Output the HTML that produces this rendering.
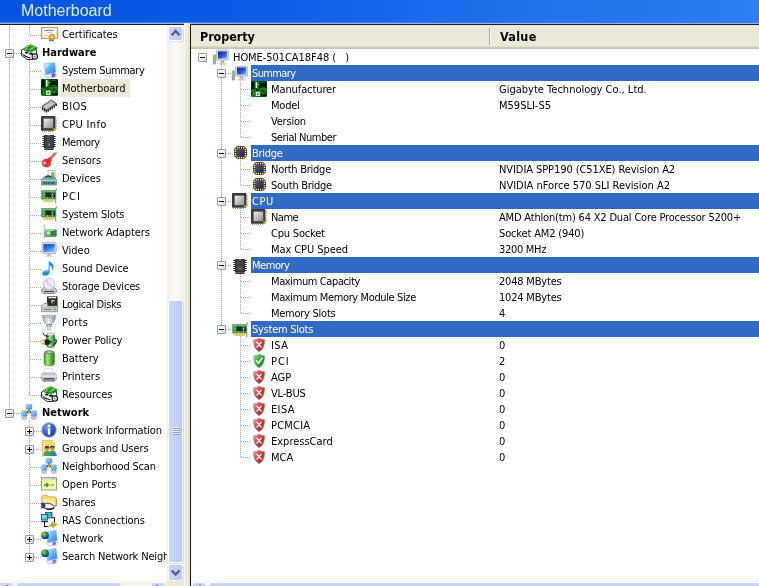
<!DOCTYPE html>
<html><head><meta charset="utf-8"><title>Motherboard</title>
<style>
html,body{margin:0;padding:0}
body{width:759px;height:586px;overflow:hidden;background:#fff;position:relative;font-family:"DejaVu Sans Condensed", "DejaVu Sans", "Liberation Sans", sans-serif;font-size:11px;color:#000}
div,span,svg,i{position:absolute;display:block}
svg.ic{overflow:visible}
#title{left:0;top:0;width:759px;height:22px;background:linear-gradient(to right,#0855e2 0%,#0b5be4 30%,#2272ec 70%,#2d7ff2 100%)}
#title span{left:20.500px;letter-spacing:0;will-change:transform;top:1px;font-family:"Liberation Sans",sans-serif;font-size:16px;line-height:19px;color:#dcecff;white-space:nowrap}
#tl1{left:0;top:22px;width:759px;height:1px;background:#3b7bea}
#tl2{left:0;top:23px;width:759px;height:1px;background:#8fb2ee}
#tl3{left:0;top:24px;width:759px;height:1px;background:#1c1c1c}
#left{left:0;top:25px;width:167px;height:557px;overflow:hidden;background:#fff}
#leftin{left:0;top:-25px;width:400px;height:600px;will-change:transform}
#right{left:191px;top:25px;width:568px;height:557px;overflow:hidden;background:#fff}
#rightin{left:-191px;top:-25px;width:800px;height:600px;will-change:transform}
#split{left:184px;top:23px;width:6px;height:563px;background:linear-gradient(to right,#faf9f3 0,#f1eee0 1.5px,#ece9d8 3px,#e6e2cf 6px)}
#rb{left:190px;top:24px;width:1px;height:562px;background:#111}
#hdr{left:191px;top:25px;width:568px;height:21px;background:#ece9d8}
#hdr1{left:191px;top:46px;width:568px;height:1px;background:#e0dccb}
#hdr2{left:191px;top:47px;width:568px;height:1px;background:#d0ccbb}
#hdr3{left:191px;top:48px;width:568px;height:1px;background:#c6c2b2}
.hd{will-change:transform;font-family:"DejaVu Sans Condensed","DejaVu Sans","Liberation Sans",sans-serif;font-weight:bold;font-size:12.5px;line-height:16px;white-space:nowrap;top:29px;letter-spacing:-0.1px}
#hsep1{left:489px;top:28px;width:1px;height:17px;background:#aca899}
#hsep2{left:490px;top:28px;width:1px;height:17px;background:#fff}
.lt,.rt,.hd{font-stretch:condensed}
.lt{white-space:nowrap;line-height:18px;height:18px;padding:0 2px}
.lt.b{font-weight:bold;padding:0}
.lt.sel{background:none}
#selbg{left:61px;top:79px;width:69px;height:18px;background:#ece9d8}
.rt{white-space:nowrap;line-height:16px;height:16px;padding:0 2px}
.rt.w{color:#fff}
.hi{left:251px;width:520px;height:16px;background:#316ac5}
.vl{width:1px;background:repeating-linear-gradient(to bottom,#a4a4a4 0,#a4a4a4 1px,transparent 1px,transparent 2px)}
.hl{height:1px;background:repeating-linear-gradient(to right,#a4a4a4 0,#a4a4a4 1px,transparent 1px,transparent 2px)}
.bx{width:7px;height:7px;border:1px solid #8e9cb4;border-radius:1px;background:linear-gradient(135deg,#fff 0%,#f4f3ee 50%,#cfccc0 100%)}
.bx .mh{left:1px;top:3px;width:5px;height:1px;background:#000}
.bx .mv{left:3px;top:1px;width:1px;height:5px;background:#000}
#vs{left:167px;top:25px;width:17px;height:557px;background:linear-gradient(to right,#f1efe8,#fbfaf7 50%,#f3f1ea)}
.sb{border:1px solid #fff;border-radius:2.5px;box-shadow:0.5px 0.5px 0 0 rgba(150,165,205,.55)}
.sbo{border-radius:3px;background:#b5c5ee}
#hsl{left:0;top:581px;width:167px;height:5px;background:#f5f4ef}
#hsr{left:191px;top:581px;width:568px;height:5px;background:#f5f4ef}
#corner{left:167px;top:582px;width:17px;height:4px;background:#ece9d8}
</style></head><body>
<div id="title"><span>Motherboard</span></div>
<div id="tl1"></div><div id="tl2"></div><div id="tl3"></div>
<div id="left"><div id="leftin">
<div id="selbg"></div>
<div class="vl" style="left:9px;top:25px;height:388px"></div>
<div class="vl" style="left:29px;top:25px;height:10px"></div>
<div class="vl" style="left:29px;top:60px;height:336px"></div>
<div class="vl" style="left:29px;top:420px;height:138px"></div>
<div class="hl" style="left:30px;top:35px;width:11px"></div>
<svg class="ic" style="left:41px;top:26px" width="16" height="16" viewBox="0 0 16 16"><rect x="0.600" y="1.500" width="16" height="10.800" fill="#fbfaf4" stroke="#b4a284" stroke-width="1.200"/>
<rect x="1.900" y="2.800" width="13.400" height="8.200" fill="none" stroke="#e6dcc6" stroke-width="0.800"/>
<path d="M3.500 4.500h9.500" stroke="#5a78c8" stroke-width="0.900"/>
<path d="M6.500 6.500h4" stroke="#9ab0e0" stroke-width="0.800"/>
<path d="M3.500 9.300h3" stroke="#8aa0c8" stroke-width="0.800"/>
<path d="M8.600 11.500l-0.500 4.300l2.300 -1.300l2.300 1.300l-0.500 -4.300z" fill="#2a58c0"/>
<circle cx="10.800" cy="10.900" r="2.900" fill="#e8a820" stroke="#c88a10" stroke-width="0.500"/>
<circle cx="10.800" cy="10.900" r="1.300" fill="#f8d060"/></svg>
<span class="lt" id="L0" style="left:60px;top:26px;letter-spacing:-0.08px">Certificates</span>
<div class="hl" style="left:14px;top:53px;width:7px"></div>
<div class="bx" style="left:5px;top:49px"><i class="mh"></i></div>
<svg class="ic" style="left:21px;top:44px" width="16" height="16" viewBox="0 0 16 16"><path d="M0.600 6l3 -1.500l12 1v6.500l-3.500 3.500h-6l-5.500 -4z" fill="#f6f6f6" stroke="#1c1c1c" stroke-width="0.900"/>
<path d="M2.500 4.800l3.500 -3.300l4 -1.300l6.500 3.300l-0.500 2.500l-5.500 2l-7 -1.200z" fill="#2e9c2a"/>
<path d="M5 3.500l3 -1.500M8.500 5.500l4 -1.500M4 5.500l2.500 -0.800M11 2.500l3 1.500" stroke="#90e060" stroke-width="1"/>
<path d="M7 4l2 -0.800M12.500 5.500l2.500 -1M5.500 6.500l3 0.500" stroke="#0e5a14" stroke-width="0.900"/>
<rect x="8.800" y="-0.300" width="2.200" height="1.600" fill="#e2c230"/>
<ellipse cx="5.800" cy="8.600" rx="1.800" ry="1.100" fill="#141414"/>
<ellipse cx="10" cy="9.700" rx="2" ry="1.100" fill="#141414"/>
<path d="M2 10.500c2 2 4 3 7.500 3.500" stroke="#1c1c1c" stroke-width="1.200" fill="none"/>
<path d="M1.200 9l2.500 2.500" stroke="#58b048" stroke-width="1"/>
<circle cx="13.800" cy="12.600" r="2.700" fill="#efefef" stroke="#141414" stroke-width="1.100"/>
<circle cx="13.800" cy="12.600" r="0.900" fill="#777"/></svg>
<span class="lt b" id="L1" style="left:42px;top:44px">Hardware</span>
<div class="hl" style="left:30px;top:71px;width:11px"></div>
<svg class="ic" style="left:41px;top:62px" width="16" height="16" viewBox="0 0 16 16"><ellipse cx="9.500" cy="13.300" rx="5.800" ry="2.500" fill="#efedf8" stroke="#aaa4d4" stroke-width="0.600"/>
<path d="M10.500 10.500l3.800 1v3l-3.500 1z" fill="#6c5cba"/>
<linearGradient id="ss3" x1="0" y1="0" x2="1" y2="1"><stop offset="0" stop-color="#c4eaff"/><stop offset="0.450" stop-color="#58b4f8"/><stop offset="1" stop-color="#2a6cdc"/></linearGradient>
<path d="M3 1.800l10.800 -1.300l1.200 10l-10.500 2.300z" fill="url(#ss3)" stroke="#8cc4ee" stroke-width="0.700"/>
<path d="M4 2.600l4.500 -0.600l-3.500 5z" fill="#dff4ff" opacity="0.700"/></svg>
<span class="lt" id="L2" style="left:60px;top:62px;letter-spacing:-0.39px">System Summary</span>
<div class="hl" style="left:30px;top:89px;width:11px"></div>
<svg class="ic" style="left:41px;top:79px" width="17" height="17" viewBox="0 0 16 16"><rect x="0" y="0" width="16" height="16" rx="1.300" fill="#0b7e0e"/>
<rect x="0.300" y="0.400" width="3.300" height="7.800" fill="#041404"/>
<rect x="8" y="0.400" width="7.800" height="6.600" fill="#041404"/>
<rect x="9.300" y="1.200" width="5" height="0.800" fill="#0b7e0e"/>
<rect x="9.800" y="5.800" width="4.500" height="0.800" fill="#0b7e0e"/>
<rect x="4.700" y="1" width="1.400" height="6" fill="#f4fbf4"/>
<path d="M6.800 3.400h2.200M7.300 2.600v1.600" stroke="#7ad87a" stroke-width="0.700"/>
<rect x="5" y="8" width="2.600" height="1.600" fill="#041404"/>
<rect x="11" y="9" width="2.200" height="1.800" fill="#041404"/>
<rect x="13.800" y="11" width="2.200" height="1.200" fill="#041404"/>
<rect x="4.800" y="10.900" width="4" height="4" fill="#f4fbf4"/>
<rect x="6.100" y="12.200" width="1.500" height="1.500" fill="#064d08"/>
<rect x="10" y="13.200" width="5.800" height="2.200" fill="#041404"/>
<rect x="0.500" y="11" width="1.200" height="2.300" fill="#041404"/>
<rect x="2" y="12" width="0.800" height="0.800" fill="#bfeebf"/>
<rect x="12" y="7.500" width="3" height="0.700" fill="#2a9c2e"/></svg>
<span class="lt sel" id="L3" style="left:60px;top:80px">Motherboard</span>
<div class="hl" style="left:30px;top:107px;width:11px"></div>
<svg class="ic" style="left:41px;top:98px" width="16" height="16" viewBox="0 0 16 16"><path d="M0.800 8.300l9.700 -6.300l5 3.700l-10 6.800z" fill="#a4a4a4" stroke="#3a3a3a" stroke-width="0.800"/>
<path d="M2.500 8.400l8 -5.200l3 2.200l-8.200 5.500z" fill="#c4c4c4"/>
<path d="M1.500 9.500v2.500M3.300 10.700v2.600M5.200 12v2.500M7.200 11.300v2.500M9.200 10v2.500M11.200 8.700v2.500M13.200 7.300v2.500M15.200 6v2.300" stroke="#111" stroke-width="1.300"/></svg>
<span class="lt" id="L4" style="left:60px;top:98px;letter-spacing:0.37px">BIOS</span>
<div class="hl" style="left:30px;top:125px;width:11px"></div>
<svg class="ic" style="left:41px;top:116px" width="16" height="16" viewBox="0 0 16 16"><rect x="0" y="0" width="14.5" height="14.8" rx="0.8" fill="#3b3a38"/>
<path d="M14.500 2.500h1.300M14.500 4.500h1.300M14.500 6.500h1.300M14.500 8.500h1.300M14.500 10.500h1.300M14.500 12.500h1.300" stroke="#c09a34" stroke-width="1"/>
<path d="M1.5 14.8v1.1M3.5 14.8v1.1M5.5 14.8v1.1M7.5 14.8v1.1M9.5 14.8v1.1M11.5 14.8v1.1" stroke="#b08a2e" stroke-width="1"/>
<linearGradient id="cg6" x1="0" y1="0" x2="1" y2="1"><stop offset="0" stop-color="#f2f2f2"/><stop offset="1" stop-color="#8c8c8c"/></linearGradient>
<rect x="2.6" y="2.6" width="9.6" height="9.6" fill="url(#cg6)"/>
<rect x="12.2" y="12.4" width="2" height="2" fill="#d2b23c"/></svg>
<span class="lt" id="L5" style="left:60px;top:116px;letter-spacing:0.33px">CPU Info</span>
<div class="hl" style="left:30px;top:143px;width:11px"></div>
<svg class="ic" style="left:41px;top:134px" width="16" height="16" viewBox="0 0 16 16"><path d="M1.5 2.5h13M1.5 4.5h13M1.5 6.5h13M1.5 8.5h13M1.5 10.5h13M1.5 12.5h13" stroke="#9a9a9a" stroke-width="1"/>
<path d="M1.5 2.5h13M1.5 4.5h13M1.5 6.5h13M1.5 8.5h13M1.5 10.5h13M1.5 12.5h13" stroke="#222" stroke-width="1" stroke-dasharray="1.5 10 1.5 0"/>
<rect x="3" y="1" width="10" height="13.6" rx="0.8" fill="#2e2e2e"/>
<rect x="4.2" y="2.2" width="7.6" height="11" fill="#454545"/>
<rect x="6.5" y="1" width="3" height="1.3" fill="#777"/>
<rect x="7" y="9.5" width="2" height="2" fill="#7b7b7b"/>
<rect x="3.4" y="14.6" width="9.2" height="1.2" fill="#111"/></svg>
<span class="lt" id="L6" style="left:60px;top:134px;letter-spacing:-0.42px">Memory</span>
<div class="hl" style="left:30px;top:161px;width:11px"></div>
<svg class="ic" style="left:41px;top:152px" width="16" height="16" viewBox="0 0 16 16"><path d="M14.800 0.800l-7 7.500" stroke="#d4b8b8" stroke-width="3" stroke-linecap="round"/>
<path d="M13.800 2l-6.500 6.800" stroke="#e45a5a" stroke-width="2.200" stroke-linecap="round"/>
<path d="M0.800 10.800c0 -2.800 2.500 -4.300 4.700 -3.800l3.200 -1.800l2.300 2.800l-1.500 2.800c1 2.200 -1 4.700 -3.700 4.700c-2.700 0 -5 -2 -5 -4.700z" fill="#e03434"/>
<circle cx="3.600" cy="11" r="1.400" fill="#f8b8b8"/>
<path d="M6 8l3.300 3.800" stroke="#b41c1c" stroke-width="0.900"/></svg>
<span class="lt" id="L7" style="left:60px;top:152px">Sensors</span>
<div class="hl" style="left:30px;top:179px;width:11px"></div>
<svg class="ic" style="left:41px;top:170px" width="16" height="16" viewBox="0 0 16 16"><rect x="7" y="0.500" width="7" height="8" fill="#f6f8f6" stroke="#9aaab0" stroke-width="0.700"/>
<rect x="10.500" y="2.500" width="2.500" height="5" rx="1" fill="#7ac860" stroke="#4a9a3a" stroke-width="0.500"/>
<path d="M4 7.500c1.500 -2 5 -2 6.500 0" stroke="#1a2a2a" stroke-width="1.300" fill="none"/>
<path d="M0.500 9.500l2 -2.200h11l2 2.200v5.500h-15z" fill="#6f9ca2" stroke="#4a7a80" stroke-width="0.600"/>
<rect x="0.500" y="9.500" width="15" height="1.600" fill="#a8c8cc"/>
<rect x="2.500" y="12" width="11" height="2" rx="1" fill="#3a5a60"/>
<path d="M4 13h8" stroke="#b8d4d8" stroke-width="0.700" stroke-dasharray="1 1"/></svg>
<span class="lt" id="L8" style="left:60px;top:170px">Devices</span>
<div class="hl" style="left:30px;top:197px;width:11px"></div>
<svg class="ic" style="left:41px;top:188px" width="16" height="16" viewBox="0 0 16 16"><path d="M16 0.200l-1.300 2.300v12.800" stroke="#8f97a8" stroke-width="1.200" fill="none"/>
<rect x="0.300" y="2.200" width="14.400" height="9.300" fill="#3d9650"/>
<rect x="0.300" y="2.200" width="14.400" height="1.800" fill="#62b46e"/>
<rect x="4.500" y="4.600" width="6" height="4.600" fill="#1f2a22"/>
<rect x="12.200" y="5" width="2" height="4.500" fill="#1f3a2a"/>
<path d="M2.300 4.200h1M2.300 6.600h1M2.300 9.300h1M9.500 3.600h1M11.200 6.600h1M11 9.800h1M6 10h1" stroke="#d6ecc8" stroke-width="1"/>
<rect x="2.400" y="11.500" width="10.400" height="2.300" fill="#e2b43a"/>
<path d="M3.800 11.500v2.300M5.800 11.500v2.300M7.800 11.500v2.300M9.800 11.500v2.300M11.600 11.500v2.300" stroke="#f6dc84" stroke-width="0.800"/></svg>
<span class="lt" id="L9" style="left:60px;top:188px;letter-spacing:1.10px">PCI</span>
<div class="hl" style="left:30px;top:215px;width:11px"></div>
<svg class="ic" style="left:41px;top:206px" width="16" height="16" viewBox="0 0 16 16"><path d="M16 0.200l-1.300 2.300v12.800" stroke="#8f97a8" stroke-width="1.200" fill="none"/>
<rect x="0.300" y="2.200" width="14.400" height="9.300" fill="#3d9650"/>
<rect x="0.300" y="2.200" width="14.400" height="1.800" fill="#62b46e"/>
<rect x="4.500" y="4.600" width="6" height="4.600" fill="#1f2a22"/>
<rect x="12.200" y="5" width="2" height="4.500" fill="#1f3a2a"/>
<path d="M2.300 4.200h1M2.300 6.600h1M2.300 9.300h1M9.500 3.600h1M11.200 6.600h1M11 9.800h1M6 10h1" stroke="#d6ecc8" stroke-width="1"/>
<rect x="2.400" y="11.500" width="10.400" height="2.300" fill="#e2b43a"/>
<path d="M3.800 11.500v2.300M5.800 11.500v2.300M7.800 11.500v2.300M9.800 11.500v2.300M11.600 11.500v2.300" stroke="#f6dc84" stroke-width="0.800"/></svg>
<span class="lt" id="L10" style="left:60px;top:206px;letter-spacing:-0.15px">System Slots</span>
<div class="hl" style="left:30px;top:233px;width:11px"></div>
<svg class="ic" style="left:41px;top:224px" width="16" height="16" viewBox="0 0 16 16"><path d="M2.500 0.500l1 1.500v13" stroke="#b4bcc8" stroke-width="1.200" fill="none"/>
<rect x="4" y="5" width="11.500" height="8" fill="#58b060"/>
<rect x="4" y="5" width="11.500" height="2" fill="#a0d8a0"/>
<rect x="6" y="7.500" width="3" height="3" fill="#c8e8c8"/>
<rect x="10.500" y="7" width="2" height="4.500" fill="#2a6a3a"/>
<rect x="13" y="6" width="2.500" height="6" fill="#2e8a44"/>
<rect x="3" y="8" width="2.500" height="3.500" fill="#8a98a8"/></svg>
<span class="lt" id="L11" style="left:60px;top:224px;letter-spacing:-0.06px">Network Adapters</span>
<div class="hl" style="left:30px;top:251px;width:11px"></div>
<svg class="ic" style="left:41px;top:242px" width="16" height="16" viewBox="0 0 16 16"><rect x="0.800" y="0.500" width="14.400" height="11" rx="0.800" fill="#d6dadf" stroke="#a4aab4" stroke-width="0.700"/>
<linearGradient id="vd13" x1="0" y1="0" x2="0.600" y2="1"><stop offset="0" stop-color="#1248c8"/><stop offset="0.550" stop-color="#2e74e4"/><stop offset="1" stop-color="#7ab8f8"/></linearGradient>
<rect x="2.400" y="2" width="11.200" height="8" fill="url(#vd13)"/>
<path d="M6.500 11.500h3l0.700 2.300h-4.400z" fill="#b4b8c0"/>
<rect x="4.300" y="13.600" width="7.400" height="1.200" rx="0.500" fill="#c8ccd2"/></svg>
<span class="lt" id="L12" style="left:60px;top:242px">Video</span>
<div class="hl" style="left:30px;top:269px;width:11px"></div>
<svg class="ic" style="left:41px;top:260px" width="16" height="16" viewBox="0 0 16 16"><path d="M7.800 0.500c0.800 2 5 2.500 4.800 6.500c-0.100 1.800 -0.800 3 -1.800 4c1 -2.500 0 -5 -2.200 -5.800v7.300c0 2 -2 3.300 -4.200 3.300c-1.800 0 -3.200 -0.800 -3.200 -2.300c0 -1.800 2 -3.200 4.200 -3.200c0.800 0 1.500 0.100 2.100 0.400z" fill="#1e8ee0"/>
<path d="M2.500 12.500c0.800 -1.200 3 -1.800 4.500 -1.200" stroke="#7cc4f8" stroke-width="1" fill="none"/></svg>
<span class="lt" id="L13" style="left:60px;top:260px;letter-spacing:-0.15px">Sound Device</span>
<div class="hl" style="left:30px;top:287px;width:11px"></div>
<svg class="ic" style="left:41px;top:278px" width="16" height="16" viewBox="0 0 16 16"><path d="M0.500 11.500l2.500 -2h10l2.500 2v2.500l-2 1.500h-11l-2 -1.500z" fill="#c4c6c8" stroke="#6a6c70" stroke-width="0.700"/>
<path d="M3 13.500h10" stroke="#4a4c50" stroke-width="1.200"/>
<circle cx="8" cy="6" r="5.600" fill="#f0ecf8" stroke="#b4aed0" stroke-width="0.700"/>
<path d="M8 6l-4.500 -3.200a5.600 5.600 0 0 1 3 -2z" fill="#d8c8f0"/>
<path d="M8 6l4.800 2.800a5.600 5.600 0 0 1 -3 2.500z" fill="#e4d4f0"/>
<circle cx="8" cy="6" r="1.700" fill="#fff" stroke="#c0b8d8" stroke-width="0.500"/>
<circle cx="8" cy="6" r="0.600" fill="#c04a6a"/></svg>
<span class="lt" id="L14" style="left:60px;top:278px;letter-spacing:-0.19px">Storage Devices</span>
<div class="hl" style="left:30px;top:305px;width:11px"></div>
<svg class="ic" style="left:41px;top:296px" width="16" height="16" viewBox="0 0 16 16"><rect x="6" y="0.300" width="10.500" height="10.400" rx="0.600" fill="#2c2c2c"/>
<rect x="7.500" y="0.800" width="7.500" height="1.500" fill="#f4f4f4"/>
<rect x="10.500" y="4" width="3" height="3.200" fill="#e8e8e8"/>
<rect x="11.600" y="4.900" width="1.900" height="2.300" fill="#2c2c2c"/>
<path d="M0.500 10l2.500 -2.500h3.500v2.500h10v5.700h-16z" fill="#d8dadc" stroke="#7a7c80" stroke-width="0.700"/>
<rect x="1.200" y="11.500" width="14.600" height="3.500" rx="0.600" fill="#f0f1f2" stroke="#8a8c90" stroke-width="0.500"/>
<path d="M2.500 13.300h8.500" stroke="#5a5c60" stroke-width="1.100"/>
<rect x="12.400" y="12.300" width="2.400" height="1.900" fill="#4aa84a"/></svg>
<span class="lt" id="L15" style="left:60px;top:296px;letter-spacing:-0.40px">Logical Disks</span>
<div class="hl" style="left:30px;top:323px;width:11px"></div>
<svg class="ic" style="left:41px;top:314px" width="16" height="16" viewBox="0 0 16 16"><linearGradient id="pt17" x1="0" y1="0" x2="1" y2="0"><stop offset="0" stop-color="#8a98a4"/><stop offset="0.450" stop-color="#f0f4f6"/><stop offset="1" stop-color="#7a8894"/></linearGradient>
<path d="M0.800 1.800h14.400l-1.200 1.500v1.500c0 2.500 -2.500 4.500 -3.500 5.500v2h-5v-2c-1 -1 -3.500 -3 -3.500 -5.500v-1.500z" fill="url(#pt17)" stroke="#6a7884" stroke-width="0.600"/>
<ellipse cx="8" cy="2.300" rx="5.500" ry="1.300" fill="#c8d0d6" stroke="#7a8894" stroke-width="0.500"/>
<rect x="6.300" y="12.300" width="3.400" height="3.700" fill="#dfe4e8" stroke="#8a98a4" stroke-width="0.500"/>
<path d="M6 10.500h4" stroke="#5a6874" stroke-width="0.800"/></svg>
<span class="lt" id="L16" style="left:60px;top:314px;letter-spacing:0.30px">Ports</span>
<div class="hl" style="left:30px;top:341px;width:11px"></div>
<svg class="ic" style="left:41px;top:332px" width="16" height="16" viewBox="0 0 16 16"><linearGradient id="pw18" x1="0" y1="0" x2="1" y2="0"><stop offset="0" stop-color="#2a8a2a"/><stop offset="0.400" stop-color="#9ae89a"/><stop offset="1" stop-color="#1e7a1e"/></linearGradient>
<rect x="5.500" y="1.200" width="8" height="14.300" rx="3" fill="url(#pw18)" stroke="#1e5a1e" stroke-width="0.600"/>
<ellipse cx="9.500" cy="2.300" rx="3.400" ry="1.300" fill="#e8f4e8" stroke="#7aa87a" stroke-width="0.400"/>
<path d="M2 0.800c0.500 2.500 2.500 3.500 5.500 3.500" stroke="#111" stroke-width="1" fill="none"/>
<path d="M14.500 7c1.500 2 0.500 5 -2 6" stroke="#111" stroke-width="1.300" fill="none"/>
<path d="M3.500 7.500h4l3.500 2.500l-3.500 2.800h-4z" fill="#1c1c1c"/>
<path d="M8 9l2 1.300l-2 1.300z" fill="#4a4a4a"/>
<rect x="0.300" y="8" width="3.400" height="1.500" fill="#d8b428"/>
<rect x="0.300" y="11" width="3.400" height="1.500" fill="#d8b428"/></svg>
<span class="lt" id="L17" style="left:60px;top:332px;letter-spacing:-0.10px">Power Policy</span>
<div class="hl" style="left:30px;top:359px;width:11px"></div>
<svg class="ic" style="left:41px;top:350px" width="16" height="16" viewBox="0 0 16 16"><linearGradient id="bt19" x1="0" y1="0" x2="1" y2="0"><stop offset="0" stop-color="#3a9a2a"/><stop offset="0.350" stop-color="#a8e878"/><stop offset="0.700" stop-color="#4aa832"/><stop offset="1" stop-color="#2a7a1e"/></linearGradient>
<rect x="3" y="0.800" width="10.500" height="15" rx="3.500" fill="url(#bt19)" stroke="#3a7a2a" stroke-width="0.500"/>
<ellipse cx="8.250" cy="2.200" rx="4.600" ry="1.400" fill="#8a9a8a" stroke="#5a6a5a" stroke-width="0.400"/>
<ellipse cx="8.250" cy="2.100" rx="2.500" ry="0.700" fill="#d8e0d8"/></svg>
<span class="lt" id="L18" style="left:60px;top:350px">Battery</span>
<div class="hl" style="left:30px;top:377px;width:11px"></div>
<svg class="ic" style="left:41px;top:368px" width="16" height="16" viewBox="0 0 16 16"><path d="M4.500 0.500h7l1 5h-9z" fill="#fbfbfb" stroke="#c8ccd0" stroke-width="0.600"/>
<path d="M0.500 7.500c0 -1.500 1 -2.500 2.500 -2.500h10c1.500 0 2.500 1 2.500 2.500v4h-15z" fill="#c4ccd2" stroke="#8a949c" stroke-width="0.600"/>
<rect x="0.500" y="7.500" width="15" height="1.300" fill="#e8ecf0"/>
<path d="M1 11.500h14l-1.500 2.500h-11z" fill="#7a8a94"/>
<rect x="3" y="10" width="10" height="1.300" fill="#4a5a64"/>
<path d="M3.500 13.300h9" stroke="#b4c4cc" stroke-width="0.900"/></svg>
<span class="lt" id="L19" style="left:60px;top:368px">Printers</span>
<div class="hl" style="left:30px;top:395px;width:11px"></div>
<svg class="ic" style="left:41px;top:386px" width="16" height="16" viewBox="0 0 16 16"><path d="M0.600 6l3 -1.500l12 1v6.500l-3.500 3.500h-6l-5.500 -4z" fill="#f6f6f6" stroke="#1c1c1c" stroke-width="0.900"/>
<path d="M2.500 4.800l3.500 -3.300l4 -1.300l6.500 3.300l-0.500 2.500l-5.500 2l-7 -1.200z" fill="#2e9c2a"/>
<path d="M5 3.500l3 -1.500M8.500 5.500l4 -1.500M4 5.500l2.500 -0.800M11 2.500l3 1.500" stroke="#90e060" stroke-width="1"/>
<path d="M7 4l2 -0.800M12.500 5.500l2.500 -1M5.500 6.500l3 0.500" stroke="#0e5a14" stroke-width="0.900"/>
<rect x="8.800" y="-0.300" width="2.200" height="1.600" fill="#e2c230"/>
<ellipse cx="5.800" cy="8.600" rx="1.800" ry="1.100" fill="#141414"/>
<ellipse cx="10" cy="9.700" rx="2" ry="1.100" fill="#141414"/>
<path d="M2 10.500c2 2 4 3 7.500 3.500" stroke="#1c1c1c" stroke-width="1.200" fill="none"/>
<path d="M1.200 9l2.500 2.500" stroke="#58b048" stroke-width="1"/>
<circle cx="13.800" cy="12.600" r="2.700" fill="#efefef" stroke="#141414" stroke-width="1.100"/>
<circle cx="13.800" cy="12.600" r="0.900" fill="#777"/></svg>
<span class="lt" id="L20" style="left:60px;top:386px">Resources</span>
<div class="hl" style="left:14px;top:413px;width:7px"></div>
<div class="bx" style="left:5px;top:409px"><i class="mh"></i></div>
<svg class="ic" style="left:21px;top:404px" width="16" height="16" viewBox="0 0 16 16"><path d="M8 6.500l-4 4M8 6.500l4 4M8 6.500v-2" stroke="#1a1a1a" stroke-width="1.400"/>
<rect x="6.800" y="6.300" width="2.400" height="3.400" fill="#e8a020"/>
<linearGradient id="nm22" x1="0" y1="0" x2="1" y2="1"><stop offset="0" stop-color="#b4dcfc"/><stop offset="1" stop-color="#3a8ae4"/></linearGradient>
<rect x="5" y="0.300" width="6" height="5" rx="0.600" fill="url(#nm22)" stroke="#5a9ae0" stroke-width="0.400"/>
<rect x="0.500" y="6.800" width="5.500" height="5.600" rx="0.600" fill="url(#nm22)" stroke="#5a9ae0" stroke-width="0.400"/>
<rect x="10" y="6.800" width="5.500" height="5.600" rx="0.600" fill="url(#nm22)" stroke="#5a9ae0" stroke-width="0.400"/>
<ellipse cx="3.250" cy="14" rx="2.800" ry="1.500" fill="#c4c8e4" stroke="#8a90c0" stroke-width="0.400"/>
<ellipse cx="12.750" cy="14" rx="2.800" ry="1.500" fill="#c4c8e4" stroke="#8a90c0" stroke-width="0.400"/></svg>
<span class="lt b" id="L21" style="left:42px;top:404px">Network</span>
<div class="hl" style="left:30px;top:431px;width:11px"></div>
<div class="bx" style="left:25px;top:427px"><i class="mh"></i><i class="mv"></i></div>
<svg class="ic" style="left:41px;top:422px" width="16" height="16" viewBox="0 0 16 16"><radialGradient id="ig23" cx="0.350" cy="0.300" r="0.800"><stop offset="0" stop-color="#6a9af0"/><stop offset="0.600" stop-color="#2a54c8"/><stop offset="1" stop-color="#1a3a9a"/></radialGradient>
<circle cx="8" cy="8" r="7.300" fill="url(#ig23)" stroke="#a8b8e4" stroke-width="1"/>
<rect x="6.800" y="6.300" width="2.400" height="6.500" rx="0.500" fill="#fff"/>
<circle cx="8" cy="4" r="1.400" fill="#fff"/></svg>
<span class="lt" id="L22" style="left:60px;top:422px;letter-spacing:-0.09px">Network Information</span>
<div class="hl" style="left:30px;top:449px;width:11px"></div>
<div class="bx" style="left:25px;top:445px"><i class="mh"></i><i class="mv"></i></div>
<svg class="ic" style="left:41px;top:440px" width="16" height="16" viewBox="0 0 16 16"><path d="M1.500 0.300h10l2 2v13.500h-12z" fill="#f6dc70" stroke="#d0b040" stroke-width="0.600"/>
<path d="M11.500 0.300v2h2z" fill="#fff4b8"/>
<circle cx="6" cy="8.300" r="2.100" fill="#b08458"/>
<path d="M3.800 8.500c-0.400 -3.300 4.800 -3.300 4.500 -0.300c-1.300 -1.200 -3.200 -1 -4.500 0.300z" fill="#2e2014"/>
<path d="M2.500 16c0 -3.500 1.300 -5.200 3.600 -5.200s3.600 1.700 3.600 5.200z" fill="#4aa050"/>
<circle cx="11.300" cy="8" r="2.100" fill="#b08458"/>
<path d="M9 8.200c-0.400 -3.300 4.800 -3.300 4.600 -0.300c-1.300 -1.200 -3.300 -1 -4.600 0.300z" fill="#2e2014"/>
<path d="M8.300 16c0 -3.500 1 -5.200 3.200 -5.200s4.300 2 4.300 5.200z" fill="#2a88a4"/></svg>
<span class="lt" id="L23" style="left:60px;top:440px;letter-spacing:-0.09px">Groups and Users</span>
<div class="hl" style="left:30px;top:467px;width:11px"></div>
<svg class="ic" style="left:41px;top:458px" width="16" height="16" viewBox="0 0 16 16"><path d="M8 6.500l-4 4M8 6.500l4 4M8 6.500v-2" stroke="#1a1a1a" stroke-width="1.400"/>
<rect x="6.800" y="6.300" width="2.400" height="3.400" fill="#e8a020"/>
<linearGradient id="nm25" x1="0" y1="0" x2="1" y2="1"><stop offset="0" stop-color="#b4dcfc"/><stop offset="1" stop-color="#3a8ae4"/></linearGradient>
<rect x="5" y="0.300" width="6" height="5" rx="0.600" fill="url(#nm25)" stroke="#5a9ae0" stroke-width="0.400"/>
<rect x="0.500" y="6.800" width="5.500" height="5.600" rx="0.600" fill="url(#nm25)" stroke="#5a9ae0" stroke-width="0.400"/>
<rect x="10" y="6.800" width="5.500" height="5.600" rx="0.600" fill="url(#nm25)" stroke="#5a9ae0" stroke-width="0.400"/>
<ellipse cx="3.250" cy="14" rx="2.800" ry="1.500" fill="#c4c8e4" stroke="#8a90c0" stroke-width="0.400"/>
<ellipse cx="12.750" cy="14" rx="2.800" ry="1.500" fill="#c4c8e4" stroke="#8a90c0" stroke-width="0.400"/></svg>
<span class="lt" id="L24" style="left:60px;top:458px;letter-spacing:-0.18px">Neighborhood Scan</span>
<div class="hl" style="left:30px;top:485px;width:11px"></div>
<svg class="ic" style="left:41px;top:476px" width="16" height="16" viewBox="0 0 16 16"><rect x="0.500" y="1.500" width="15" height="12.500" fill="#f4f6a8" stroke="#8a8c84" stroke-width="0.800"/>
<rect x="0.900" y="1.900" width="14.200" height="1.800" fill="#d4d6c4"/>
<path d="M11 2.800h3" stroke="#6a6c64" stroke-width="0.800" stroke-dasharray="0.800 0.600"/>
<path d="M3 9h4M5.300 7l2 2l-2 2" stroke="#2aa02a" stroke-width="1.300" fill="none"/>
<path d="M9.500 9h3.500" stroke="#5ab85a" stroke-width="1.300"/></svg>
<span class="lt" id="L25" style="left:60px;top:476px">Open Ports</span>
<div class="hl" style="left:30px;top:503px;width:11px"></div>
<svg class="ic" style="left:41px;top:494px" width="16" height="16" viewBox="0 0 16 16"><path d="M0.800 3c0 -1 0.700 -2 2 -2h3l1.500 1.800h6c1.200 0 2 0.800 2 2v6.700h-14.500z" fill="#f6d878" stroke="#c89a28" stroke-width="0.700"/>
<rect x="2" y="5" width="12.500" height="5.500" fill="#fbec9c"/>
<path d="M15.300 5v7l-1.500 1" stroke="#b88a20" stroke-width="0.900" fill="none"/>
<rect x="0.300" y="8.800" width="3.500" height="5.500" fill="#1a3a9a"/>
<path d="M3.800 10c2 -1 5 -1 7 0.500c2 1.200 3 2.500 1 3.500c-2 1 -6 1.200 -8 0.300z" fill="#f4f4f4" stroke="#1a1a1a" stroke-width="0.800"/>
<path d="M5 14.800c2 1 6 0.800 8.500 -0.800" stroke="#1a1a1a" stroke-width="1.200" fill="none"/></svg>
<span class="lt" id="L26" style="left:60px;top:494px">Shares</span>
<div class="hl" style="left:30px;top:521px;width:11px"></div>
<svg class="ic" style="left:41px;top:512px" width="16" height="16" viewBox="0 0 16 16"><rect x="4.500" y="0.500" width="6.500" height="5.500" fill="#3ab4c8" stroke="#1a4a5a" stroke-width="0.800"/>
<rect x="0.500" y="2.500" width="6" height="5.500" fill="#58c8e0" stroke="#1a4a5a" stroke-width="0.800"/>
<path d="M1.500 4h3.500" stroke="#d4f4fc" stroke-width="0.900"/>
<path d="M0.500 9.500h6.500" stroke="#1a2a3a" stroke-width="1.300"/>
<path d="M11 5.500h2.500v5" stroke="#1a1a1a" stroke-width="1"  fill="none"/>
<path d="M3.500 10v4.500h4" stroke="#1a1a1a" stroke-width="1.100" fill="none"/>
<path d="M8.500 13.500l3.500 -3.500l3.800 2l-3.300 3.500z" fill="#f0d428" stroke="#8a7a18" stroke-width="0.600"/>
<path d="M10 13l3.500 1M11 12l3.300 1" stroke="#8a7a18" stroke-width="0.700"/></svg>
<span class="lt" id="L27" style="left:60px;top:512px;letter-spacing:-0.06px">RAS Connections</span>
<div class="hl" style="left:30px;top:539px;width:11px"></div>
<div class="bx" style="left:25px;top:535px"><i class="mh"></i><i class="mv"></i></div>
<svg class="ic" style="left:41px;top:530px" width="16" height="16" viewBox="0 0 16 16"><ellipse cx="11" cy="13.500" rx="5.200" ry="2.400" fill="#efedf8" stroke="#aaa4d4" stroke-width="0.600"/>
<path d="M11.500 11l3.500 1v2.500l-3.500 1z" fill="#8a7ac8"/>
<linearGradient id="ng29" x1="0" y1="0" x2="1" y2="1"><stop offset="0" stop-color="#cceaff"/><stop offset="0.500" stop-color="#62b4f8"/><stop offset="1" stop-color="#2a74dc"/></linearGradient>
<path d="M5 2.300l10 -2l1.300 10.200l-9.500 2.300z" fill="url(#ng29)" stroke="#8ac0ec" stroke-width="0.700"/>
<radialGradient id="gl29" cx="0.350" cy="0.350" r="0.750"><stop offset="0" stop-color="#8ad86a"/><stop offset="0.500" stop-color="#2a8a3a"/><stop offset="1" stop-color="#1a3aa8"/></radialGradient>
<circle cx="4" cy="5.300" r="3.900" fill="url(#gl29)"/>
<path d="M1.800 7.500c1.500 1 3.500 1 5.200 -0.500" stroke="#1a3ab8" stroke-width="1.400" fill="none"/></svg>
<span class="lt" id="L28" style="left:60px;top:530px">Network</span>
<div class="hl" style="left:30px;top:557px;width:11px"></div>
<div class="bx" style="left:25px;top:553px"><i class="mh"></i><i class="mv"></i></div>
<svg class="ic" style="left:41px;top:548px" width="16" height="16" viewBox="0 0 16 16"><ellipse cx="11" cy="13.500" rx="5.200" ry="2.400" fill="#efedf8" stroke="#aaa4d4" stroke-width="0.600"/>
<path d="M11.500 11l3.500 1v2.500l-3.500 1z" fill="#8a7ac8"/>
<linearGradient id="ng30" x1="0" y1="0" x2="1" y2="1"><stop offset="0" stop-color="#cceaff"/><stop offset="0.500" stop-color="#62b4f8"/><stop offset="1" stop-color="#2a74dc"/></linearGradient>
<path d="M5 2.300l10 -2l1.300 10.200l-9.500 2.300z" fill="url(#ng30)" stroke="#8ac0ec" stroke-width="0.700"/>
<radialGradient id="gl30" cx="0.350" cy="0.350" r="0.750"><stop offset="0" stop-color="#8ad86a"/><stop offset="0.500" stop-color="#2a8a3a"/><stop offset="1" stop-color="#1a3aa8"/></radialGradient>
<circle cx="4" cy="5.300" r="3.900" fill="url(#gl30)"/>
<path d="M1.800 7.500c1.500 1 3.500 1 5.200 -0.500" stroke="#1a3ab8" stroke-width="1.400" fill="none"/></svg>
<span class="lt" id="L29" style="left:60px;top:548px;letter-spacing:-0.16px">Search Network Neighborhood</span>
</div></div>
<div id="vs"></div>
<div class="sb" style="left:168px;top:25.5px;width:13.3px;height:13.8px;background:linear-gradient(to right,#c9d7fc,#bccbf7)"></div>
<svg style="left:168px;top:25px" width="16" height="17" viewBox="0 0 16 17"><path d="M3.700 10.200L7.600 6L11.500 10.200" stroke="#4d6185" stroke-width="2.300" fill="none"/></svg>
<div class="sb" style="left:168px;top:299.7px;width:13.4px;height:261.5px;background:linear-gradient(to right,#c9d7fc,#bccbf7)"></div>
<svg style="left:172px;top:427px" width="8" height="8" viewBox="0 0 8 8"><path d="M0 0.500h7M0 2.500h7M0 4.500h7M0 6.500h7" stroke="#eef2fd" stroke-width="1"/><path d="M1 1.500h7M1 3.500h7M1 5.500h7M1 7.500h7" stroke="#8c9fd0" stroke-width="1"/></svg>
<div class="sb" style="left:168px;top:564.2px;width:13.3px;height:14.399999999999999px;background:linear-gradient(to right,#c9d7fc,#bccbf7)"></div>
<svg style="left:168px;top:564px" width="16" height="17" viewBox="0 0 16 17"><path d="M3.700 6.400L7.600 10.600L11.500 6.400" stroke="#4d6185" stroke-width="2.300" fill="none"/></svg>
<div id="split"></div><div id="rb"></div>
<div id="right"><div id="rightin">
<div class="vl" style="left:221px;top:64px;height:265px"></div>
<div class="vl" style="left:240px;top:80px;height:58px"></div>
<div class="vl" style="left:240px;top:160px;height:26px"></div>
<div class="vl" style="left:240px;top:208px;height:42px"></div>
<div class="vl" style="left:240px;top:272px;height:42px"></div>
<div class="vl" style="left:240px;top:336px;height:122px"></div>
<div class="bx" style="left:198px;top:53px"><i class="mh"></i></div>
<svg class="ic" style="left:213px;top:49px" width="16" height="16" viewBox="0 0 16 16"><g transform="translate(0 0.700)">
<rect x="0.300" y="5" width="2.200" height="9.500" rx="0.800" fill="#a8a89c" stroke="#6e6e66" stroke-width="0.500"/>
<rect x="0.800" y="6" width="1.200" height="2.500" fill="#7fd24a"/>
<rect x="3.500" y="0.500" width="12" height="10" rx="0.800" fill="#d4d8dc" stroke="#9aa0a8" stroke-width="0.600"/>
<linearGradient id="scr31" x1="0" y1="0" x2="1" y2="1"><stop offset="0" stop-color="#0a1ea8"/><stop offset="0.600" stop-color="#2a5ad8"/><stop offset="1" stop-color="#8cb8f4"/></linearGradient>
<rect x="5" y="1.800" width="9" height="7" fill="url(#scr31)"/>
<path d="M8 10.500h3l0.800 3h-4.600z" fill="#b8bcc2"/>
<rect x="5.500" y="13.500" width="8" height="1.300" rx="0.600" fill="#c6cace"/>
</g></svg>
<span class="rt" id="P0" style="left:231px;top:50px;letter-spacing:-0.06px">HOME-501CA18F48 (&nbsp;&nbsp;&nbsp;)</span>
<div class="hi" style="top:65px"></div>
<div class="hl" style="left:226px;top:73px;width:6px"></div>
<div class="bx" style="left:217px;top:69px"><i class="mh"></i></div>
<svg class="ic" style="left:232px;top:65px" width="16" height="16" viewBox="0 0 16 16"><g transform="translate(0 0.700)">
<rect x="0.300" y="5" width="2.200" height="9.500" rx="0.800" fill="#a8a89c" stroke="#6e6e66" stroke-width="0.500"/>
<rect x="0.800" y="6" width="1.200" height="2.500" fill="#7fd24a"/>
<rect x="3.500" y="0.500" width="12" height="10" rx="0.800" fill="#d4d8dc" stroke="#9aa0a8" stroke-width="0.600"/>
<linearGradient id="scr32" x1="0" y1="0" x2="1" y2="1"><stop offset="0" stop-color="#0a1ea8"/><stop offset="0.600" stop-color="#2a5ad8"/><stop offset="1" stop-color="#8cb8f4"/></linearGradient>
<rect x="5" y="1.800" width="9" height="7" fill="url(#scr32)"/>
<path d="M8 10.500h3l0.800 3h-4.600z" fill="#b8bcc2"/>
<rect x="5.500" y="13.500" width="8" height="1.300" rx="0.600" fill="#c6cace"/>
</g></svg>
<span class="rt w" id="P1" style="left:250px;top:66px;letter-spacing:-0.63px">Summary</span>
<div class="hl" style="left:241px;top:89px;width:10px"></div>
<svg class="ic" style="left:251px;top:81px" width="16" height="16" viewBox="0 0 16 16"><rect x="0" y="0" width="16" height="16" rx="1.300" fill="#0b7e0e"/>
<rect x="0.300" y="0.400" width="3.300" height="7.800" fill="#041404"/>
<rect x="8" y="0.400" width="7.800" height="6.600" fill="#041404"/>
<rect x="9.300" y="1.200" width="5" height="0.800" fill="#0b7e0e"/>
<rect x="9.800" y="5.800" width="4.500" height="0.800" fill="#0b7e0e"/>
<rect x="4.700" y="1" width="1.400" height="6" fill="#f4fbf4"/>
<path d="M6.800 3.400h2.200M7.300 2.600v1.600" stroke="#7ad87a" stroke-width="0.700"/>
<rect x="5" y="8" width="2.600" height="1.600" fill="#041404"/>
<rect x="11" y="9" width="2.200" height="1.800" fill="#041404"/>
<rect x="13.800" y="11" width="2.200" height="1.200" fill="#041404"/>
<rect x="4.800" y="10.900" width="4" height="4" fill="#f4fbf4"/>
<rect x="6.100" y="12.200" width="1.500" height="1.500" fill="#064d08"/>
<rect x="10" y="13.200" width="5.800" height="2.200" fill="#041404"/>
<rect x="0.500" y="11" width="1.200" height="2.300" fill="#041404"/>
<rect x="2" y="12" width="0.800" height="0.800" fill="#bfeebf"/>
<rect x="12" y="7.500" width="3" height="0.700" fill="#2a9c2e"/></svg>
<span class="rt" id="P2" style="left:269px;top:82px;letter-spacing:-0.10px">Manufacturer</span>
<span class="rt" id="V2" style="left:497px;top:82px;letter-spacing:0.01px">Gigabyte Technology Co., Ltd.</span>
<div class="hl" style="left:241px;top:105px;width:10px"></div>
<span class="rt" id="P3" style="left:269px;top:98px;letter-spacing:-0.23px">Model</span>
<span class="rt" id="V3" style="left:497px;top:98px">M59SLI-S5</span>
<div class="hl" style="left:241px;top:121px;width:10px"></div>
<span class="rt" id="P4" style="left:269px;top:114px;letter-spacing:-0.20px">Version</span>
<div class="hl" style="left:241px;top:137px;width:10px"></div>
<span class="rt" id="P5" style="left:269px;top:130px;letter-spacing:-0.45px">Serial Number</span>
<div class="hi" style="top:145px"></div>
<div class="hl" style="left:226px;top:153px;width:6px"></div>
<div class="bx" style="left:217px;top:149px"><i class="mh"></i></div>
<svg class="ic" style="left:232px;top:145px" width="16" height="16" viewBox="0 0 16 16"><path d="M5 1.100h7l3 3v7l-3 3h-7l-3 -3v-7z" fill="#3a3226"/>
<path d="M5.300 1.700v1.800M7.300 1.700v1.800M9.600 1.700v1.800M11.700 1.700v1.800M5.300 11.700v1.800M7.300 11.700v1.800M9.600 11.700v1.800M11.700 11.700v1.800" stroke="#f0dc98" stroke-width="1.200"/>
<path d="M2.600 4.400h1.800M2.600 6.400h1.800M2.600 8.600h1.800M2.600 10.700h1.800M12.600 4.400h1.800M12.600 6.400h1.800M12.600 8.600h1.800M12.600 10.700h1.800" stroke="#f0dc98" stroke-width="1.200"/>
<linearGradient id="bg34" x1="0" y1="0" x2="1" y2="1"><stop offset="0" stop-color="#5a5680"/><stop offset="1" stop-color="#25233a"/></linearGradient>
<rect x="4.800" y="3.900" width="7.400" height="7.400" fill="url(#bg34)"/></svg>
<span class="rt w" id="P6" style="left:250px;top:146px;letter-spacing:-0.30px">Bridge</span>
<div class="hl" style="left:241px;top:169px;width:10px"></div>
<svg class="ic" style="left:251px;top:161px" width="16" height="16" viewBox="0 0 16 16"><path d="M5 1.100h7l3 3v7l-3 3h-7l-3 -3v-7z" fill="#3a3226"/>
<path d="M5.300 1.700v1.800M7.300 1.700v1.800M9.600 1.700v1.800M11.700 1.700v1.800M5.300 11.700v1.800M7.300 11.700v1.800M9.600 11.700v1.800M11.700 11.700v1.800" stroke="#f0dc98" stroke-width="1.200"/>
<path d="M2.600 4.400h1.800M2.600 6.400h1.800M2.600 8.600h1.800M2.600 10.700h1.800M12.600 4.400h1.800M12.600 6.400h1.800M12.600 8.600h1.800M12.600 10.700h1.800" stroke="#f0dc98" stroke-width="1.200"/>
<linearGradient id="bg35" x1="0" y1="0" x2="1" y2="1"><stop offset="0" stop-color="#5a5680"/><stop offset="1" stop-color="#25233a"/></linearGradient>
<rect x="4.800" y="3.900" width="7.400" height="7.400" fill="url(#bg35)"/></svg>
<span class="rt" id="P7" style="left:269px;top:162px;letter-spacing:-0.26px">North Bridge</span>
<span class="rt" id="V7" style="left:497px;top:162px;letter-spacing:-0.08px">NVIDIA SPP190 (C51XE) Revision A2</span>
<div class="hl" style="left:241px;top:185px;width:10px"></div>
<svg class="ic" style="left:251px;top:177px" width="16" height="16" viewBox="0 0 16 16"><path d="M5 1.100h7l3 3v7l-3 3h-7l-3 -3v-7z" fill="#3a3226"/>
<path d="M5.300 1.700v1.800M7.300 1.700v1.800M9.600 1.700v1.800M11.700 1.700v1.800M5.300 11.700v1.800M7.300 11.700v1.800M9.600 11.700v1.800M11.700 11.700v1.800" stroke="#f0dc98" stroke-width="1.200"/>
<path d="M2.600 4.400h1.800M2.600 6.400h1.800M2.600 8.600h1.800M2.600 10.700h1.800M12.600 4.400h1.800M12.600 6.400h1.800M12.600 8.600h1.800M12.600 10.700h1.800" stroke="#f0dc98" stroke-width="1.200"/>
<linearGradient id="bg36" x1="0" y1="0" x2="1" y2="1"><stop offset="0" stop-color="#5a5680"/><stop offset="1" stop-color="#25233a"/></linearGradient>
<rect x="4.800" y="3.900" width="7.400" height="7.400" fill="url(#bg36)"/></svg>
<span class="rt" id="P8" style="left:269px;top:178px;letter-spacing:-0.27px">South Bridge</span>
<span class="rt" id="V8" style="left:497px;top:178px">NVIDIA nForce 570 SLI Revision A2</span>
<div class="hi" style="top:193px"></div>
<div class="hl" style="left:226px;top:201px;width:6px"></div>
<div class="bx" style="left:217px;top:197px"><i class="mh"></i></div>
<svg class="ic" style="left:232px;top:193px" width="16" height="16" viewBox="0 0 16 16"><rect x="0" y="0" width="14.5" height="14.8" rx="0.8" fill="#3b3a38"/>
<path d="M14.500 2.500h1.300M14.500 4.500h1.300M14.500 6.500h1.300M14.500 8.500h1.300M14.500 10.500h1.300M14.500 12.500h1.300" stroke="#c09a34" stroke-width="1"/>
<path d="M1.5 14.8v1.1M3.5 14.8v1.1M5.5 14.8v1.1M7.5 14.8v1.1M9.5 14.8v1.1M11.5 14.8v1.1" stroke="#b08a2e" stroke-width="1"/>
<linearGradient id="cg37" x1="0" y1="0" x2="1" y2="1"><stop offset="0" stop-color="#f2f2f2"/><stop offset="1" stop-color="#8c8c8c"/></linearGradient>
<rect x="2.6" y="2.6" width="9.6" height="9.6" fill="url(#cg37)"/>
<rect x="12.2" y="12.4" width="2" height="2" fill="#d2b23c"/></svg>
<span class="rt w" id="P9" style="left:250px;top:194px;letter-spacing:0.60px">CPU</span>
<div class="hl" style="left:241px;top:217px;width:10px"></div>
<svg class="ic" style="left:251px;top:209px" width="16" height="16" viewBox="0 0 16 16"><rect x="0" y="0" width="14.5" height="14.8" rx="0.8" fill="#3b3a38"/>
<path d="M14.500 2.500h1.300M14.500 4.500h1.300M14.500 6.500h1.300M14.500 8.500h1.300M14.500 10.500h1.300M14.500 12.500h1.300" stroke="#c09a34" stroke-width="1"/>
<path d="M1.5 14.8v1.1M3.5 14.8v1.1M5.5 14.8v1.1M7.5 14.8v1.1M9.5 14.8v1.1M11.5 14.8v1.1" stroke="#b08a2e" stroke-width="1"/>
<linearGradient id="cg38" x1="0" y1="0" x2="1" y2="1"><stop offset="0" stop-color="#f2f2f2"/><stop offset="1" stop-color="#8c8c8c"/></linearGradient>
<rect x="2.6" y="2.6" width="9.6" height="9.6" fill="url(#cg38)"/>
<rect x="12.2" y="12.4" width="2" height="2" fill="#d2b23c"/></svg>
<span class="rt" id="P10" style="left:269px;top:210px;letter-spacing:-0.53px">Name</span>
<span class="rt" id="V10" style="left:497px;top:210px;letter-spacing:-0.18px">AMD Athlon(tm) 64 X2 Dual Core Processor 5200+</span>
<div class="hl" style="left:241px;top:233px;width:10px"></div>
<span class="rt" id="P11" style="left:269px;top:226px;letter-spacing:-0.20px">Cpu Socket</span>
<span class="rt" id="V11" style="left:497px;top:226px;letter-spacing:-0.15px">Socket AM2 (940)</span>
<div class="hl" style="left:241px;top:249px;width:10px"></div>
<span class="rt" id="P12" style="left:269px;top:242px;letter-spacing:-0.08px">Max CPU Speed</span>
<span class="rt" id="V12" style="left:497px;top:242px;letter-spacing:-0.29px">3200 MHz</span>
<div class="hi" style="top:257px"></div>
<div class="hl" style="left:226px;top:265px;width:6px"></div>
<div class="bx" style="left:217px;top:261px"><i class="mh"></i></div>
<svg class="ic" style="left:232px;top:258px" width="16" height="16" viewBox="0 0 16 16"><path d="M1.5 2.5h13M1.5 4.5h13M1.5 6.5h13M1.5 8.5h13M1.5 10.5h13M1.5 12.5h13" stroke="#9a9a9a" stroke-width="1"/>
<path d="M1.5 2.5h13M1.5 4.5h13M1.5 6.5h13M1.5 8.5h13M1.5 10.5h13M1.5 12.5h13" stroke="#222" stroke-width="1" stroke-dasharray="1.5 10 1.5 0"/>
<rect x="3" y="1" width="10" height="13.6" rx="0.8" fill="#2e2e2e"/>
<rect x="4.2" y="2.2" width="7.6" height="11" fill="#454545"/>
<rect x="6.5" y="1" width="3" height="1.3" fill="#777"/>
<rect x="7" y="9.5" width="2" height="2" fill="#7b7b7b"/>
<rect x="3.4" y="14.6" width="9.2" height="1.2" fill="#111"/></svg>
<span class="rt w" id="P13" style="left:250px;top:258px;letter-spacing:-0.46px">Memory</span>
<div class="hl" style="left:241px;top:281px;width:10px"></div>
<span class="rt" id="P14" style="left:269px;top:274px;letter-spacing:-0.39px">Maximum Capacity</span>
<span class="rt" id="V14" style="left:497px;top:274px;letter-spacing:-0.19px">2048 MBytes</span>
<div class="hl" style="left:241px;top:297px;width:10px"></div>
<span class="rt" id="P15" style="left:269px;top:290px;letter-spacing:-0.38px">Maximum Memory Module Size</span>
<span class="rt" id="V15" style="left:497px;top:290px;letter-spacing:-0.19px">1024 MBytes</span>
<div class="hl" style="left:241px;top:313px;width:10px"></div>
<span class="rt" id="P16" style="left:269px;top:306px;letter-spacing:-0.26px">Memory Slots</span>
<span class="rt" id="V16" style="left:497px;top:306px">4</span>
<div class="hi" style="top:321px"></div>
<div class="hl" style="left:226px;top:329px;width:6px"></div>
<div class="bx" style="left:217px;top:325px"><i class="mh"></i></div>
<svg class="ic" style="left:232px;top:322px" width="16" height="16" viewBox="0 0 16 16"><path d="M16 0.200l-1.300 2.300v12.800" stroke="#8f97a8" stroke-width="1.200" fill="none"/>
<rect x="0.300" y="2.200" width="14.400" height="9.300" fill="#3d9650"/>
<rect x="0.300" y="2.200" width="14.400" height="1.800" fill="#62b46e"/>
<rect x="4.500" y="4.600" width="6" height="4.600" fill="#1f2a22"/>
<rect x="12.200" y="5" width="2" height="4.500" fill="#1f3a2a"/>
<path d="M2.300 4.200h1M2.300 6.600h1M2.300 9.300h1M9.500 3.600h1M11.200 6.600h1M11 9.800h1M6 10h1" stroke="#d6ecc8" stroke-width="1"/>
<rect x="2.400" y="11.500" width="10.400" height="2.300" fill="#e2b43a"/>
<path d="M3.800 11.500v2.300M5.800 11.500v2.300M7.800 11.500v2.300M9.800 11.500v2.300M11.600 11.500v2.300" stroke="#f6dc84" stroke-width="0.800"/></svg>
<span class="rt w" id="P17" style="left:250px;top:322px;letter-spacing:-0.26px">System Slots</span>
<div class="hl" style="left:241px;top:345px;width:10px"></div>
<svg class="ic" style="left:251px;top:337px" width="16" height="16" viewBox="0 0 16 16"><linearGradient id="sr41" x1="0" y1="0" x2="1" y2="1"><stop offset="0" stop-color="#f4b4b4"/><stop offset="0.400" stop-color="#d84444"/><stop offset="1" stop-color="#8a1818"/></linearGradient>
<path d="M8.100 1c1.500 1.100 3.300 1.700 5.500 1.700c0.200 5 -1.200 9.400 -5.500 12c-4.300 -2.600 -5.700 -7 -5.500 -12c2.200 0 4 -0.600 5.500 -1.700z" fill="url(#sr41)" stroke="#c07070" stroke-width="0.500"/>
<path d="M6 5.200l4.200 4.800M10.200 5.200l-4.200 4.800" stroke="#fbeaea" stroke-width="1.500" stroke-linecap="round"/></svg>
<span class="rt" id="P18" style="left:269px;top:338px;letter-spacing:0.45px">ISA</span>
<span class="rt" id="V18" style="left:497px;top:338px">0</span>
<div class="hl" style="left:241px;top:361px;width:10px"></div>
<svg class="ic" style="left:251px;top:353px" width="16" height="16" viewBox="0 0 16 16"><linearGradient id="sg42" x1="0" y1="0" x2="1" y2="1"><stop offset="0" stop-color="#b4ecae"/><stop offset="0.400" stop-color="#3cb044"/><stop offset="1" stop-color="#166a1e"/></linearGradient>
<path d="M8.100 1c1.500 1.100 3.300 1.700 5.500 1.700c0.200 5 -1.200 9.400 -5.500 12c-4.300 -2.600 -5.700 -7 -5.500 -12c2.200 0 4 -0.600 5.500 -1.700z" fill="url(#sg42)" stroke="#6ab070" stroke-width="0.500"/>
<path d="M5.500 7.800l2 2.400l3.400 -5" stroke="#f4fff4" stroke-width="1.600" stroke-linecap="round" stroke-linejoin="round" fill="none"/></svg>
<span class="rt" id="P19" style="left:269px;top:354px;letter-spacing:0.95px">PCI</span>
<span class="rt" id="V19" style="left:497px;top:354px">2</span>
<div class="hl" style="left:241px;top:377px;width:10px"></div>
<svg class="ic" style="left:251px;top:369px" width="16" height="16" viewBox="0 0 16 16"><linearGradient id="sr43" x1="0" y1="0" x2="1" y2="1"><stop offset="0" stop-color="#f4b4b4"/><stop offset="0.400" stop-color="#d84444"/><stop offset="1" stop-color="#8a1818"/></linearGradient>
<path d="M8.100 1c1.500 1.100 3.300 1.700 5.500 1.700c0.200 5 -1.200 9.400 -5.500 12c-4.300 -2.600 -5.700 -7 -5.500 -12c2.200 0 4 -0.600 5.500 -1.700z" fill="url(#sr43)" stroke="#c07070" stroke-width="0.500"/>
<path d="M6 5.200l4.200 4.800M10.200 5.200l-4.200 4.800" stroke="#fbeaea" stroke-width="1.500" stroke-linecap="round"/></svg>
<span class="rt" id="P20" style="left:269px;top:370px">AGP</span>
<span class="rt" id="V20" style="left:497px;top:370px">0</span>
<div class="hl" style="left:241px;top:393px;width:10px"></div>
<svg class="ic" style="left:251px;top:385px" width="16" height="16" viewBox="0 0 16 16"><linearGradient id="sr44" x1="0" y1="0" x2="1" y2="1"><stop offset="0" stop-color="#f4b4b4"/><stop offset="0.400" stop-color="#d84444"/><stop offset="1" stop-color="#8a1818"/></linearGradient>
<path d="M8.100 1c1.500 1.100 3.300 1.700 5.500 1.700c0.200 5 -1.200 9.400 -5.500 12c-4.300 -2.600 -5.700 -7 -5.500 -12c2.200 0 4 -0.600 5.500 -1.700z" fill="url(#sr44)" stroke="#c07070" stroke-width="0.500"/>
<path d="M6 5.200l4.200 4.800M10.200 5.200l-4.200 4.800" stroke="#fbeaea" stroke-width="1.500" stroke-linecap="round"/></svg>
<span class="rt" id="P21" style="left:269px;top:386px;letter-spacing:-0.16px">VL-BUS</span>
<span class="rt" id="V21" style="left:497px;top:386px">0</span>
<div class="hl" style="left:241px;top:409px;width:10px"></div>
<svg class="ic" style="left:251px;top:401px" width="16" height="16" viewBox="0 0 16 16"><linearGradient id="sr45" x1="0" y1="0" x2="1" y2="1"><stop offset="0" stop-color="#f4b4b4"/><stop offset="0.400" stop-color="#d84444"/><stop offset="1" stop-color="#8a1818"/></linearGradient>
<path d="M8.100 1c1.500 1.100 3.300 1.700 5.500 1.700c0.200 5 -1.200 9.400 -5.500 12c-4.300 -2.600 -5.700 -7 -5.500 -12c2.200 0 4 -0.600 5.500 -1.700z" fill="url(#sr45)" stroke="#c07070" stroke-width="0.500"/>
<path d="M6 5.200l4.200 4.800M10.200 5.200l-4.200 4.800" stroke="#fbeaea" stroke-width="1.500" stroke-linecap="round"/></svg>
<span class="rt" id="P22" style="left:269px;top:402px;letter-spacing:0.37px">EISA</span>
<span class="rt" id="V22" style="left:497px;top:402px">0</span>
<div class="hl" style="left:241px;top:425px;width:10px"></div>
<svg class="ic" style="left:251px;top:417px" width="16" height="16" viewBox="0 0 16 16"><linearGradient id="sr46" x1="0" y1="0" x2="1" y2="1"><stop offset="0" stop-color="#f4b4b4"/><stop offset="0.400" stop-color="#d84444"/><stop offset="1" stop-color="#8a1818"/></linearGradient>
<path d="M8.100 1c1.500 1.100 3.300 1.700 5.500 1.700c0.200 5 -1.200 9.400 -5.500 12c-4.300 -2.600 -5.700 -7 -5.500 -12c2.200 0 4 -0.600 5.500 -1.700z" fill="url(#sr46)" stroke="#c07070" stroke-width="0.500"/>
<path d="M6 5.200l4.200 4.800M10.200 5.200l-4.200 4.800" stroke="#fbeaea" stroke-width="1.500" stroke-linecap="round"/></svg>
<span class="rt" id="P23" style="left:269px;top:418px;letter-spacing:0.22px">PCMCIA</span>
<span class="rt" id="V23" style="left:497px;top:418px">0</span>
<div class="hl" style="left:241px;top:441px;width:10px"></div>
<svg class="ic" style="left:251px;top:433px" width="16" height="16" viewBox="0 0 16 16"><linearGradient id="sr47" x1="0" y1="0" x2="1" y2="1"><stop offset="0" stop-color="#f4b4b4"/><stop offset="0.400" stop-color="#d84444"/><stop offset="1" stop-color="#8a1818"/></linearGradient>
<path d="M8.100 1c1.500 1.100 3.300 1.700 5.500 1.700c0.200 5 -1.200 9.400 -5.500 12c-4.300 -2.600 -5.700 -7 -5.500 -12c2.200 0 4 -0.600 5.500 -1.700z" fill="url(#sr47)" stroke="#c07070" stroke-width="0.500"/>
<path d="M6 5.200l4.200 4.800M10.200 5.200l-4.200 4.800" stroke="#fbeaea" stroke-width="1.500" stroke-linecap="round"/></svg>
<span class="rt" id="P24" style="left:269px;top:434px">ExpressCard</span>
<span class="rt" id="V24" style="left:497px;top:434px">0</span>
<div class="hl" style="left:241px;top:457px;width:10px"></div>
<svg class="ic" style="left:251px;top:449px" width="16" height="16" viewBox="0 0 16 16"><linearGradient id="sr48" x1="0" y1="0" x2="1" y2="1"><stop offset="0" stop-color="#f4b4b4"/><stop offset="0.400" stop-color="#d84444"/><stop offset="1" stop-color="#8a1818"/></linearGradient>
<path d="M8.100 1c1.500 1.100 3.300 1.700 5.500 1.700c0.200 5 -1.200 9.400 -5.500 12c-4.300 -2.600 -5.700 -7 -5.500 -12c2.200 0 4 -0.600 5.500 -1.700z" fill="url(#sr48)" stroke="#c07070" stroke-width="0.500"/>
<path d="M6 5.200l4.200 4.800M10.200 5.200l-4.200 4.800" stroke="#fbeaea" stroke-width="1.500" stroke-linecap="round"/></svg>
<span class="rt" id="P25" style="left:269px;top:450px">MCA</span>
<span class="rt" id="V25" style="left:497px;top:450px">0</span>
</div></div>
<div id="hdr"></div><div id="hdr1"></div><div id="hdr2"></div><div id="hdr3"></div>
<div id="hsep1"></div><div id="hsep2"></div>
<span class="hd" style="left:199.500px">Property</span>
<span class="hd" style="left:499.500px;letter-spacing:0.300px">Value</span>
<div id="hsl"></div><div id="hsr"></div><div id="corner"></div>
<div class="sb" style="left:-3px;top:582.3px;width:13.5px;height:6px;background:linear-gradient(to bottom,#c9d7fc,#bccbf7)"></div>
<div style="left:5.500px;top:584.800px;width:2.200px;height:1.200px;background:#5a6d92"></div>
<div class="sb" style="left:15.6px;top:582.3px;width:103px;height:6px;background:linear-gradient(to bottom,#c9d7fc,#bccbf7)"></div>
<div class="sb" style="left:150.8px;top:582.3px;width:12.5px;height:6px;background:linear-gradient(to bottom,#c9d7fc,#bccbf7)"></div>
<div style="left:156px;top:584.800px;width:2.200px;height:1.200px;background:#5a6d92"></div>
<div class="sb" style="left:192px;top:582.3px;width:12px;height:6px;background:linear-gradient(to bottom,#c9d7fc,#bccbf7)"></div>
<div style="left:198.500px;top:584.800px;width:2.200px;height:1.200px;background:#5a6d92"></div>
<div class="sb" style="left:209px;top:582.3px;width:558px;height:6px;background:linear-gradient(to bottom,#c9d7fc,#bccbf7)"></div>
</body></html>
